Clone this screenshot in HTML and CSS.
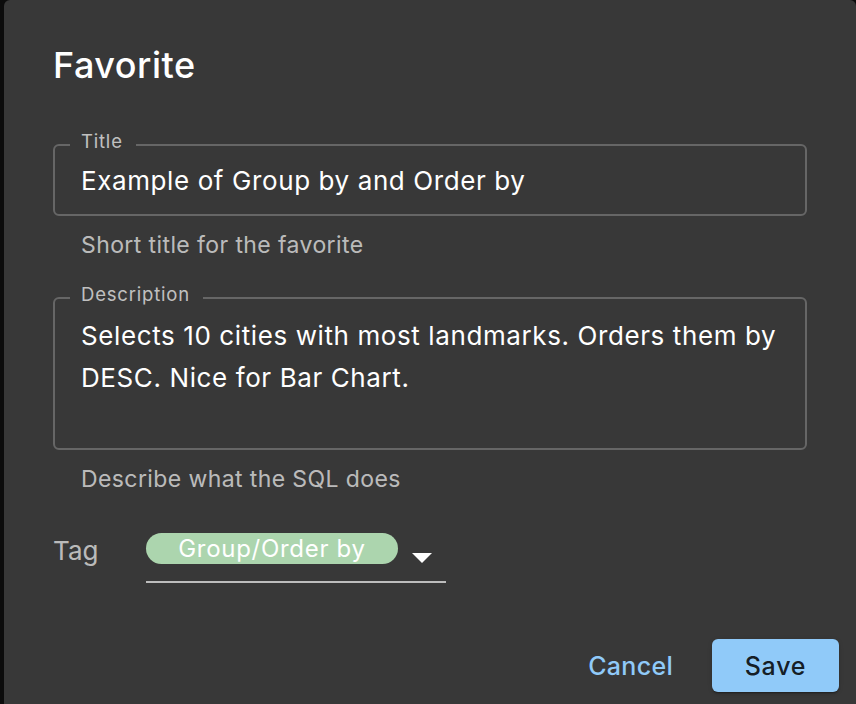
FILE: index.html
```html
<!DOCTYPE html>
<html lang="en">
<head>
<meta charset="utf-8">
<title>Favorite</title>
<link rel="stylesheet" href="styles.css">
</head>
<body>
<div class="screen">
  <div class="backdrop-strip"></div>
  <div class="dialog">
    <h2 class="dialog-title">Favorite</h2>
    <fieldset class="field field-title">
      <legend class="field-label">Title</legend>
      <div class="field-input">Example of Group by and Order by</div>
    </fieldset>
    <p class="helper">Short title for the favorite</p>
    <fieldset class="field field-desc">
      <legend class="field-label">Description</legend>
      <div class="field-input multiline">Selects 10 cities with most landmarks. Orders them by<br>DESC. Nice for Bar Chart.</div>
    </fieldset>
    <p class="helper">Describe what the SQL does</p>
    <div class="tag-row">
      <span class="tag-label">Tag</span>
      <div class="select">
        <span class="chip">Group/Order by</span>
        <svg class="arrow" width="20" height="31" viewBox="0 0 20 31"><polygon points="0,20 20,20 10,30" fill="#ffffff"/></svg>
      </div>
    </div>
    <div class="actions">
      <button class="btn-text">Cancel</button>
      <button class="btn-contained">Save</button>
    </div>
  </div>
</div>
</body>
</html>
```
FILE: styles.css
```css
html, body {
  margin: 0;
  height: 100%;
  overflow: hidden;
  background: #0c0c0c;
}

body {
  font-family: Inter, "Noto Sans", sans-serif;
}

.screen {
  display: flex;
  height: 704px;
}

.backdrop-strip {
  width: 4px;
  flex: none;
  background: #0c0c0c;
}

.dialog {
  flex: 1;
  min-width: 0;
  background: #383838;
  border-radius: 6px 6px 0 0;
  padding: 43px 49px 0;
  color: #ffffff;
}

.dialog-title {
  margin: 0;
  font-size: 36px;
  line-height: 44px;
  font-weight: 500;
  letter-spacing: 0.5px;
}

.field {
  margin: 0;
  min-width: 0;
  padding: 3.5px 26px 12px;
  border: 2px solid rgba(255, 255, 255, 0.23);
  border-radius: 6px;
}

.field-title {
  margin-top: 46.5px;
}

.field-desc {
  margin-top: 27.8px;
}

.field-label {
  margin-left: -11px;
  padding: 0 13px 9px 11px;
  font-size: 18.5px;
  line-height: 14px;
  letter-spacing: 0.8px;
  color: rgba(255, 255, 255, 0.7);
}

.field-input {
  font-size: 26px;
  line-height: 42px;
  letter-spacing: 0.6px;
  white-space: nowrap;
}

.field-desc .field-input {
  padding-top: 2px;
}

.multiline {
  height: 121px;
}

.helper {
  margin: 15px 0 0 28px;
  font-size: 23px;
  line-height: 28px;
  letter-spacing: 0.4px;
  color: rgba(255, 255, 255, 0.68);
}

.tag-row {
  display: flex;
  margin-top: 38px;
}

.tag-label {
  width: 93px;
  flex: none;
  padding-top: 2px;
  font-size: 26px;
  line-height: 36px;
  color: rgba(255, 255, 255, 0.68);
}

.select {
  display: flex;
  width: 300px;
  padding: 2px 0 17px;
  border-bottom: 2px solid #bdbdbd;
}

.chip {
  width: 252px;
  height: 31px;
  border-radius: 16px;
  background: #acd5ae;
  color: #ffffff;
  font-size: 24px;
  line-height: 31px;
  letter-spacing: 0.7px;
  text-align: center;
}

.arrow {
  margin-left: 14px;
}

.actions {
  display: flex;
  justify-content: flex-end;
  align-items: center;
  gap: 39px;
  margin: 56px -32px 0 0;
}

.btn-text {
  padding: 0;
  border: none;
  background: none;
  color: #90caf9;
  font-family: Inter, "Noto Sans", sans-serif;
  font-size: 25px;
  font-weight: 500;
  letter-spacing: 0.3px;
}

.btn-contained {
  width: 127px;
  height: 53px;
  border: none;
  border-radius: 6px;
  background: #90caf9;
  color: rgba(0, 0, 0, 0.87);
  font-family: Inter, "Noto Sans", sans-serif;
  font-size: 25px;
  font-weight: 500;
  letter-spacing: 0.8px;
  box-shadow: 0 3px 1px -2px rgba(0, 0, 0, 0.2), 0 2px 2px 0 rgba(0, 0, 0, 0.14), 0 1px 5px 0 rgba(0, 0, 0, 0.12);
}
```
